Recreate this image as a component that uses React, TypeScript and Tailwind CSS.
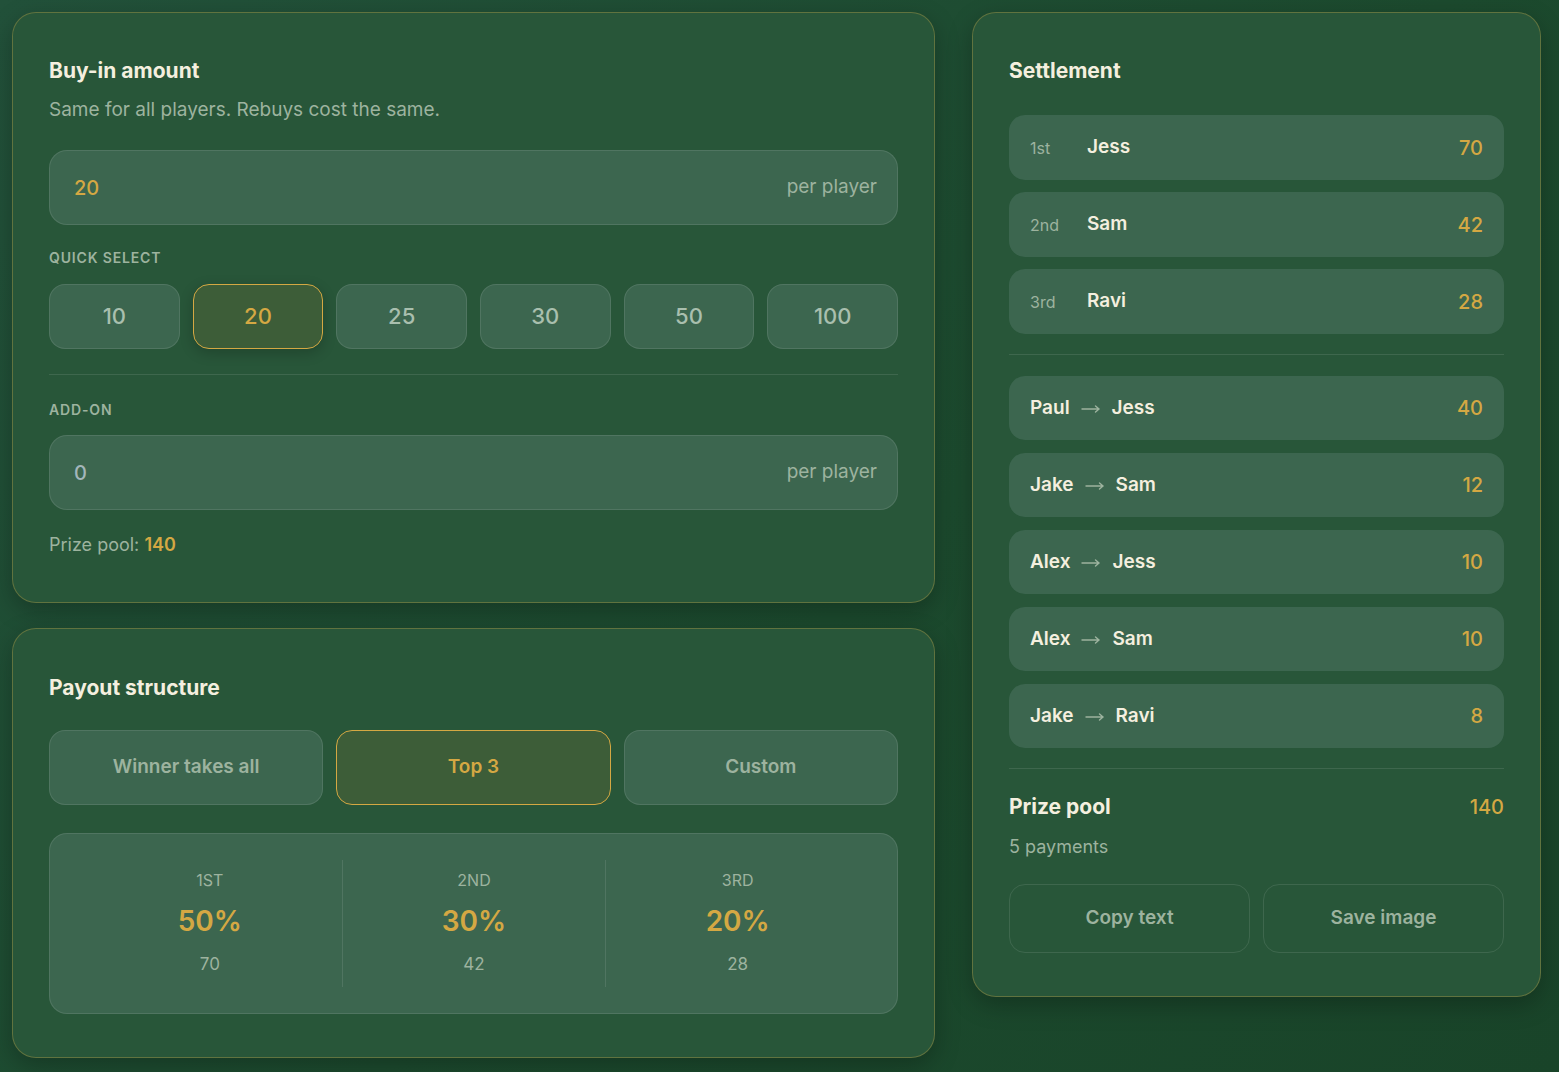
import { ReactNode } from "react";

const quick = [10, 20, 25, 30, 50, 100];
const places = [
  { rank: "1st", name: "Jess", amount: 70 },
  { rank: "2nd", name: "Sam", amount: 42 },
  { rank: "3rd", name: "Ravi", amount: 28 },
];
const transfers = [
  { from: "Paul", to: "Jess", amount: 40 },
  { from: "Jake", to: "Sam", amount: 12 },
  { from: "Alex", to: "Jess", amount: 10 },
  { from: "Alex", to: "Sam", amount: 10 },
  { from: "Jake", to: "Ravi", amount: 8 },
];
const payouts = [
  { label: "1ST", pct: "50%", amount: 70 },
  { label: "2ND", pct: "30%", amount: 42 },
  { label: "3RD", pct: "20%", amount: 28 },
];

function Card({ children, className = "" }: { children: ReactNode; className?: string }) {
  return (
    <div
      className={`rounded-[24px] border border-[#c9a84a]/35 bg-[#285639] shadow-[0_8px_24px_rgba(0,0,0,0.25)] ${className}`}
    >
      {children}
    </div>
  );
}

function AmountInput({ value, gold }: { value: string; gold?: boolean }) {
  return (
    <div className="flex h-[75px] items-center justify-between rounded-[18px] border border-white/10 bg-[#3c664f] pl-[24px] pr-[20px]">
      <span className={`text-[20px] font-medium ${gold ? "text-[#d4a843]" : "text-[#a3b6bb]"}`}>{value}</span>
      <span className="text-[19px] text-[#9db39f]">per player</span>
    </div>
  );
}

function Arrow() {
  return (
    <svg width="20" height="10" viewBox="0 0 20 10" className="mx-[11px] mt-[2px]" fill="none" stroke="#9db39f" strokeWidth="1.4" strokeLinecap="round">
      <path d="M1 5h17M14.5 2l3.5 3-3.5 3" />
    </svg>
  );
}

export default function App() {
  return (
    <div
      className="min-h-[1072px] w-full bg-[linear-gradient(135deg,#22513a_0%,#1c4a2e_55%,#194429_100%)] p-[12px] text-[#f4efdf]"
      style={{ fontFamily: "Inter, 'Noto Sans', sans-serif" }}
    >
      <div className="flex gap-[37px]">
        {/* left column */}
        <div className="flex w-[923px] flex-col gap-[25px]">
          <Card className="px-[36px] pt-[44px] pb-[44px]">
            <h2 className="text-[21px] font-bold leading-[28px]">Buy-in amount</h2>
            <p className="mt-[13px] text-[19px] leading-[24px] text-[#9db39f]">Same for all players. Rebuys cost the same.</p>
            <div className="mt-[28px]">
              <AmountInput value="20" gold />
            </div>
            <div className="mt-[23px] text-[14px] font-semibold uppercase leading-[20px] tracking-[0.06em] text-[#9db39f]">
              Quick select
            </div>
            <div className="mt-[16px] grid grid-cols-6 gap-[13px]">
              {quick.map((q) => (
                <div
                  key={q}
                  className={`flex h-[65px] items-center justify-center rounded-[16px] border text-[22px] font-medium ${
                    q === 20
                      ? "border-[#d4a843] bg-[#3d5d38] text-[#d4a843] shadow-[0_4px_14px_rgba(0,0,0,0.2)]"
                      : "border-white/10 bg-[#3c664f] text-[#a9bfae]"
                  }`}
                >
                  {q}
                </div>
              ))}
            </div>
            <div className="mt-[25px] h-px bg-white/10" />
            <div className="mt-[25px] text-[14px] font-semibold uppercase leading-[20px] tracking-[0.06em] text-[#9db39f]">
              Add-on
            </div>
            <div className="mt-[15px]">
              <AmountInput value="0" />
            </div>
            <p className="mt-[22px] text-[18px] leading-[26px] text-[#9db39f]">
              Prize pool: <span className="font-semibold text-[#d4a843]">140</span>
            </p>
          </Card>

          <Card className="px-[36px] pt-[45px] pb-[43px]">
            <h2 className="text-[21px] font-bold leading-[28px]">Payout structure</h2>
            <div className="mt-[28px] grid grid-cols-3 gap-[13px]">
              {["Winner takes all", "Top 3", "Custom"].map((t) => (
                <div
                  key={t}
                  className={`flex h-[75px] items-center justify-center rounded-[16px] border text-[19px] font-semibold ${
                    t === "Top 3"
                      ? "border-[#d4a843] bg-[#3d5d38] text-[#d4a843]"
                      : "border-white/10 bg-[#3c664f] text-[#9db39f]"
                  }`}
                >
                  {t}
                </div>
              ))}
            </div>
            <div className="mt-[28px] grid grid-cols-3 rounded-[18px] border border-white/10 bg-[#3c664f] px-[28px] py-[26px]">
              {payouts.map((p, i) => (
                <div
                  key={p.label}
                  className={`flex flex-col items-center pt-[9px] pb-[11px] ${i > 0 ? "border-l border-white/10" : ""}`}
                >
                  <span className="text-[16px] leading-[22px] text-[#9db39f]">{p.label}</span>
                  <span className="mt-[12px] text-[28px] font-semibold leading-[36px] text-[#d4a843]">{p.pct}</span>
                  <span className="mt-[13px] text-[17px] leading-[24px] text-[#9db39f]">{p.amount}</span>
                </div>
              ))}
            </div>
          </Card>
        </div>

        {/* right column */}
        <div className="w-[569px]">
          <Card className="px-[36px] pt-[44px] pb-[43px]">
            <h2 className="text-[21px] font-bold leading-[28px]">Settlement</h2>
            <div className="mt-[30px] flex flex-col gap-[12px]">
              {places.map((p) => (
                <div key={p.rank} className="flex h-[65px] items-center rounded-[16px] bg-[#3c664f] px-[21px]">
                  <span className="w-[57px] text-[16px] text-[#9db39f]">{p.rank}</span>
                  <span className="text-[19px] font-semibold">{p.name}</span>
                  <span className="ml-auto text-[20px] font-medium text-[#d4a843]">{p.amount}</span>
                </div>
              ))}
            </div>
            <div className="mt-[20px] h-px bg-white/10" />
            <div className="mt-[21px] flex flex-col gap-[13px]">
              {transfers.map((t, i) => (
                <div key={i} className="flex h-[64px] items-center rounded-[16px] bg-[#3c664f] px-[21px]">
                  <span className="text-[19px] font-semibold">{t.from}</span>
                  <Arrow />
                  <span className="text-[19px] font-semibold">{t.to}</span>
                  <span className="ml-auto text-[20px] font-medium text-[#d4a843]">{t.amount}</span>
                </div>
              ))}
            </div>
            <div className="mt-[20px] h-px bg-white/10" />
            <div className="mt-[24px] flex items-center justify-between leading-[28px]">
              <span className="text-[21px] font-bold">Prize pool</span>
              <span className="text-[20px] font-medium text-[#d4a843]">140</span>
            </div>
            <p className="mt-[13px] text-[18px] leading-[26px] text-[#9db39f]">5 payments</p>
            <div className="mt-[24px] grid grid-cols-2 gap-[13px]">
              {["Copy text", "Save image"].map((b) => (
                <div
                  key={b}
                  className="flex h-[69px] items-center justify-center rounded-[16px] border border-white/10 text-[19px] font-semibold text-[#9db39f]"
                >
                  {b}
                </div>
              ))}
            </div>
          </Card>
        </div>
      </div>
    </div>
  );
}
